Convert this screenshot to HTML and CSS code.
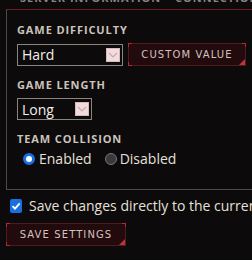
FILE: index.html
```html
<!DOCTYPE html>
<html>
<head>
<meta charset="utf-8">
<link rel="stylesheet" href="styles.css">
</head>
<body>
<div class="tabs">
  <span class="tab tab-first">SERVER INFORMATION</span>
  <span class="tab">CONNECTION</span>
</div>
<div class="panel">
  <div class="field">
    <div class="label">GAME DIFFICULTY</div>
    <div class="row">
      <div class="select select-wide"><span>Hard</span><span class="arrow"><svg width="10" height="6" viewBox="0 0 10 6"><path d="M1 1 L5 5 L9 1" fill="none" stroke="#c9a9ab" stroke-width="1.2"/></svg></span></div>
      <div class="btn btn-custom">CUSTOM VALUE<span class="tri"></span></div>
    </div>
  </div>
  <div class="field">
    <div class="label">GAME LENGTH</div>
    <div class="row">
      <div class="select select-narrow"><span>Long</span><span class="arrow"><svg width="10" height="6" viewBox="0 0 10 6"><path d="M1 1 L5 5 L9 1" fill="none" stroke="#c9a9ab" stroke-width="1.2"/></svg></span></div>
    </div>
  </div>
  <div class="field">
    <div class="label">TEAM COLLISION</div>
    <div class="radios">
      <span class="radio on"></span><span class="rtext">Enabled</span>
      <span class="radio"></span><span class="rtext">Disabled</span>
    </div>
  </div>
</div>
<div class="check-row">
  <span class="check"><svg width="12" height="12" viewBox="0 0 12 12"><path d="M2.5 6.2 L5 8.7 L9.7 3.3" fill="none" stroke="#fff" stroke-width="1.8"/></svg></span>
  <span class="ctext">Save changes directly to the current</span>
</div>
<div class="btn btn-save">SAVE SETTINGS<span class="tri"></span></div>
</body>
</html>
```
FILE: styles.css
```css
html, body {
  margin: 0;
  padding: 0;
  background: #0c0a0a;
  width: 252px;
  height: 260px;
  overflow: hidden;
  font-family: "Open Sans", "Noto Sans", sans-serif;
  color: #d8d4d0;
}
.tabs {
  height: 9px;
  overflow: hidden;
  display: flex;
  align-items: flex-end;
  white-space: nowrap;
  padding-left: 20px;
}
.tab {
  font-size: 11px;
  font-weight: bold;
  letter-spacing: 1px;
  color: #8a8480;
  line-height: 11px;
  margin-bottom: 6px;
}
.tab-first { width: 155px; flex: none; }
.panel {
  margin-left: 6px;
  border-top: 1px solid #6e1d22;
  border-left: 1px solid #4e4a48;
  border-bottom: 1px solid #4e4a48;
  padding: 13px 0 0 10px;
  height: 166px;
}
.field { margin-bottom: 12px; }
.label {
  font-size: 11px;
  font-weight: bold;
  letter-spacing: 0.9px;
  color: #cbc3bc;
  line-height: 14px;
  margin-bottom: 6px;
}
.row { display: flex; gap: 5px; align-items: center; }
.select {
  box-sizing: border-box;
  height: 22px;
  border: 1px solid #8a8480;
  display: flex;
  align-items: center;
  justify-content: space-between;
  padding: 0 2px 0 4px;
  font-size: 14px;
  color: #f2efec;
}
.select-wide { width: 106px; }
.select-narrow { width: 75px; }
.arrow {
  width: 14px;
  height: 14px;
  background: #f1dcdd;
  display: flex;
  align-items: center;
  justify-content: center;
  box-sizing: border-box;
  border: 1px solid #d9b9bb;
}
.btn {
  position: relative;
  box-sizing: border-box;
  height: 23px;
  background: #230a0d;
  border: 1px solid #4d1b20;
  display: flex;
  align-items: center;
  justify-content: center;
  font-size: 10px;
  letter-spacing: 1.1px;
  color: #cfc4c0;
  font-family: "DejaVu Sans", sans-serif;
}
.btn::before {
  content: "";
  position: absolute;
  inset: -1px;
  background:
    linear-gradient(#b02a33, #b02a33) top left / 4px 1px no-repeat,
    linear-gradient(#b02a33, #b02a33) top left / 1px 4px no-repeat,
    linear-gradient(#b02a33, #b02a33) top right / 4px 1px no-repeat,
    linear-gradient(#b02a33, #b02a33) top right / 1px 4px no-repeat,
    linear-gradient(#b02a33, #b02a33) bottom left / 4px 1px no-repeat,
    linear-gradient(#b02a33, #b02a33) bottom left / 1px 4px no-repeat;
}
.tri {
  position: absolute;
  right: 0;
  bottom: 0;
  width: 0;
  height: 0;
  border-left: 6px solid transparent;
  border-bottom: 6px solid #c0323c;
}
.btn-custom { width: 118px; }
.radios {
  display: flex;
  align-items: center;
  font-size: 14px;
  color: #e4e0dc;
  margin-top: -3px;
  padding-left: 6px;
}
.radio {
  box-sizing: border-box;
  width: 12px;
  height: 12px;
  border-radius: 50%;
  background: #3a3a3c;
  border: 1px solid #777;
  margin-right: 4px;
}
.radio + .rtext { margin-right: 13px; }
.radio:not(.on) { margin-right: 3px; }
.radio.on {
  background: #fff;
  border: 3px solid #1a6fe0;
}
.check-row {
  display: flex;
  align-items: center;
  margin: 6px 0 0 10px;
  white-space: nowrap;
}
.check {
  width: 14px;
  height: 14px;
  border-radius: 2px;
  background: #1a6fe0;
  display: flex;
  align-items: center;
  justify-content: center;
  margin-right: 7px;
}
.ctext { font-size: 14px; color: #e4e0dc; }
.btn-save {
  margin: 8px 0 0 6px;
  width: 120px;
}
```
